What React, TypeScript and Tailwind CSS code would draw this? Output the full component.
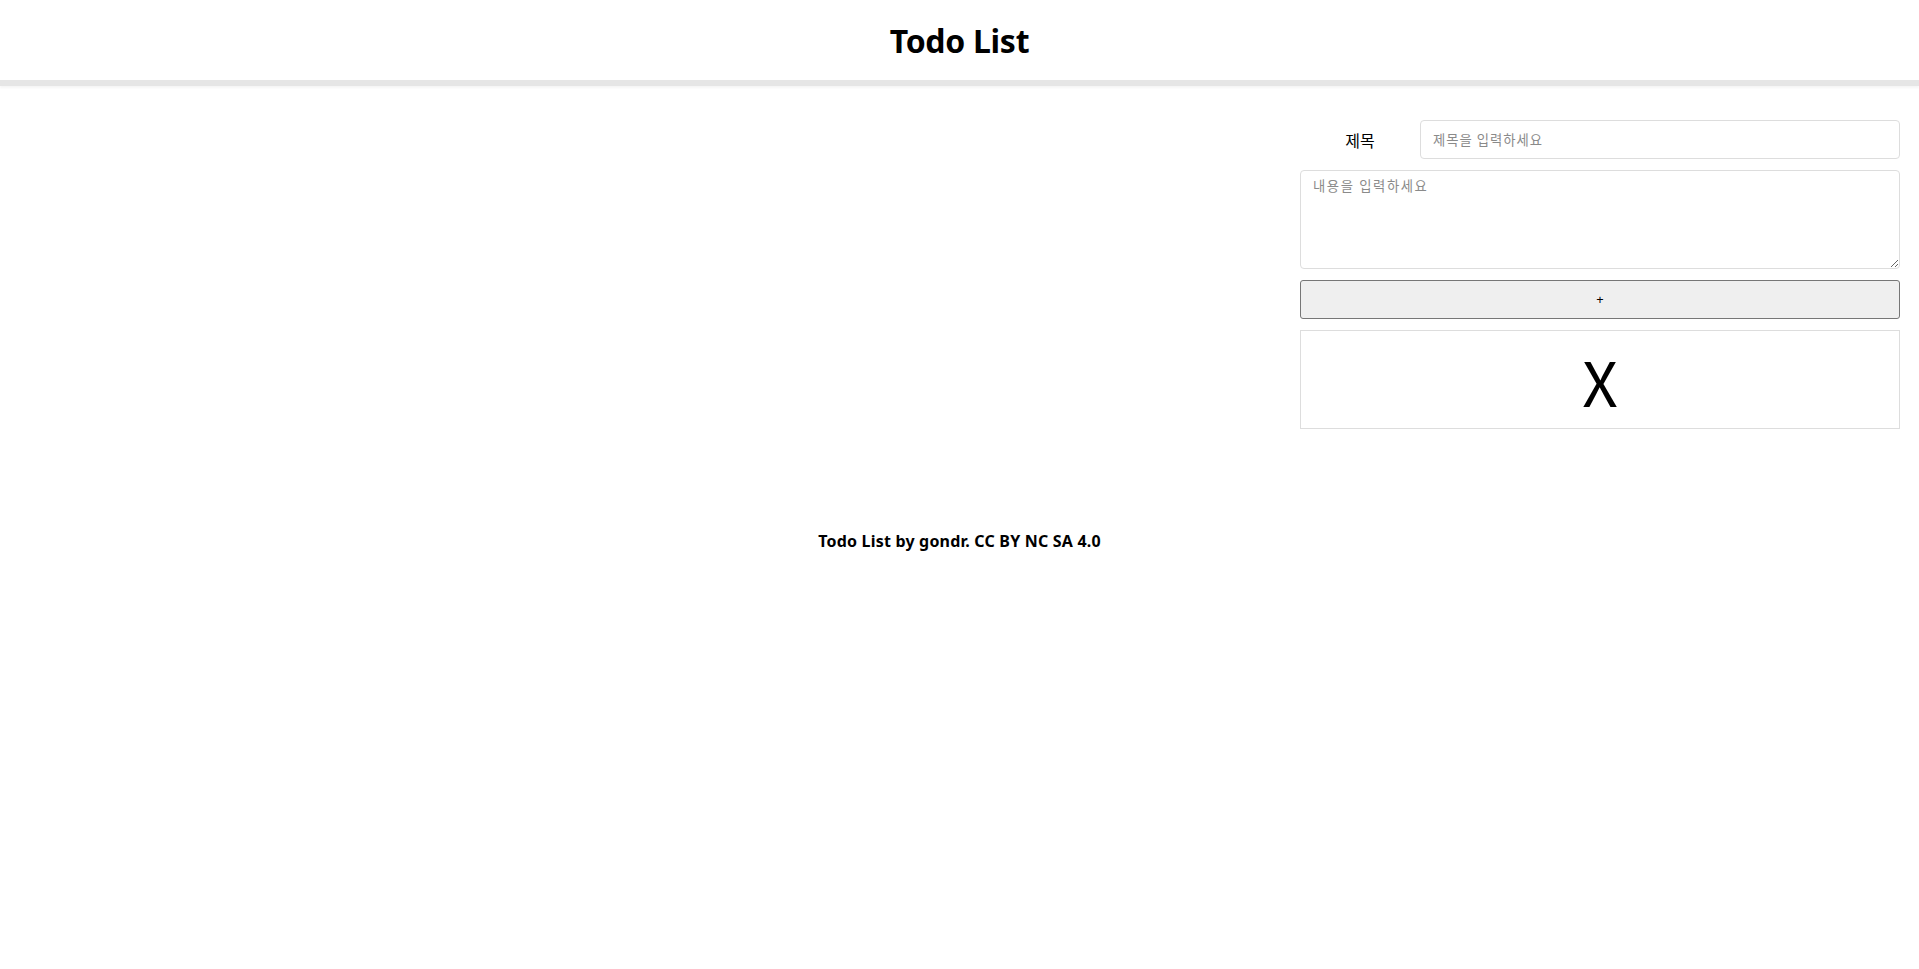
import React from "react";

export default function App() {
  const font = { fontFamily: '"Noto Sans", "Noto Sans CJK KR", sans-serif' };
  return (
    <div className="min-h-[969px] bg-white text-black" style={font}>
      <header className="h-[86px] flex items-center justify-center border-b-[6px] border-[#e6e6e6] shadow-[0_2px_2px_rgba(0,0,0,0.04)]">
        <h1 className="text-[32px] font-bold leading-none tracking-[-0.3px] pt-[2px]">Todo List</h1>
      </header>
      <main className="flex justify-end pr-[19px] pt-[34px]">
        <div className="w-[600px] flex flex-col gap-[11px]">
          <div className="flex items-center h-[39px]">
            <label className="w-[120px] text-center text-[16px] font-normal font-['Noto_Sans_CJK_KR',sans-serif]">제목</label>
            <input
              className="flex-1 h-[39px] border border-[#dddddd] rounded-[4px] px-[12px] text-[13.33px] tracking-[1px] placeholder:text-[#8a8a8a] outline-none font-['Noto_Sans_CJK_KR',sans-serif]"
              placeholder="제목을 입력하세요"
            />
          </div>
          <textarea
            className="h-[99px] border border-[#dddddd] rounded-[4px] px-[12px] py-[5px] text-[13.33px] tracking-[1.6px] placeholder:text-[#8a8a8a] outline-none font-['Noto_Sans_CJK_KR',sans-serif]"
            placeholder="내용을 입력하세요"
          />
          <button className="h-[39px] bg-[#efefef] border border-[#767676] rounded-[3px] text-[13px] leading-none">+</button>
          <div className="h-[99px] border border-[#dddddd] flex items-center justify-center">
            <span className="text-[62px] font-normal leading-none font-['Noto_Sans_CJK_KR',sans-serif]">X</span>
          </div>
        </div>
      </main>
      <footer className="mt-[101px] text-center text-[16px] font-bold leading-[22px] tracking-[0.2px]">
        Todo List by gondr. CC BY NC SA 4.0
      </footer>
    </div>
  );
}
